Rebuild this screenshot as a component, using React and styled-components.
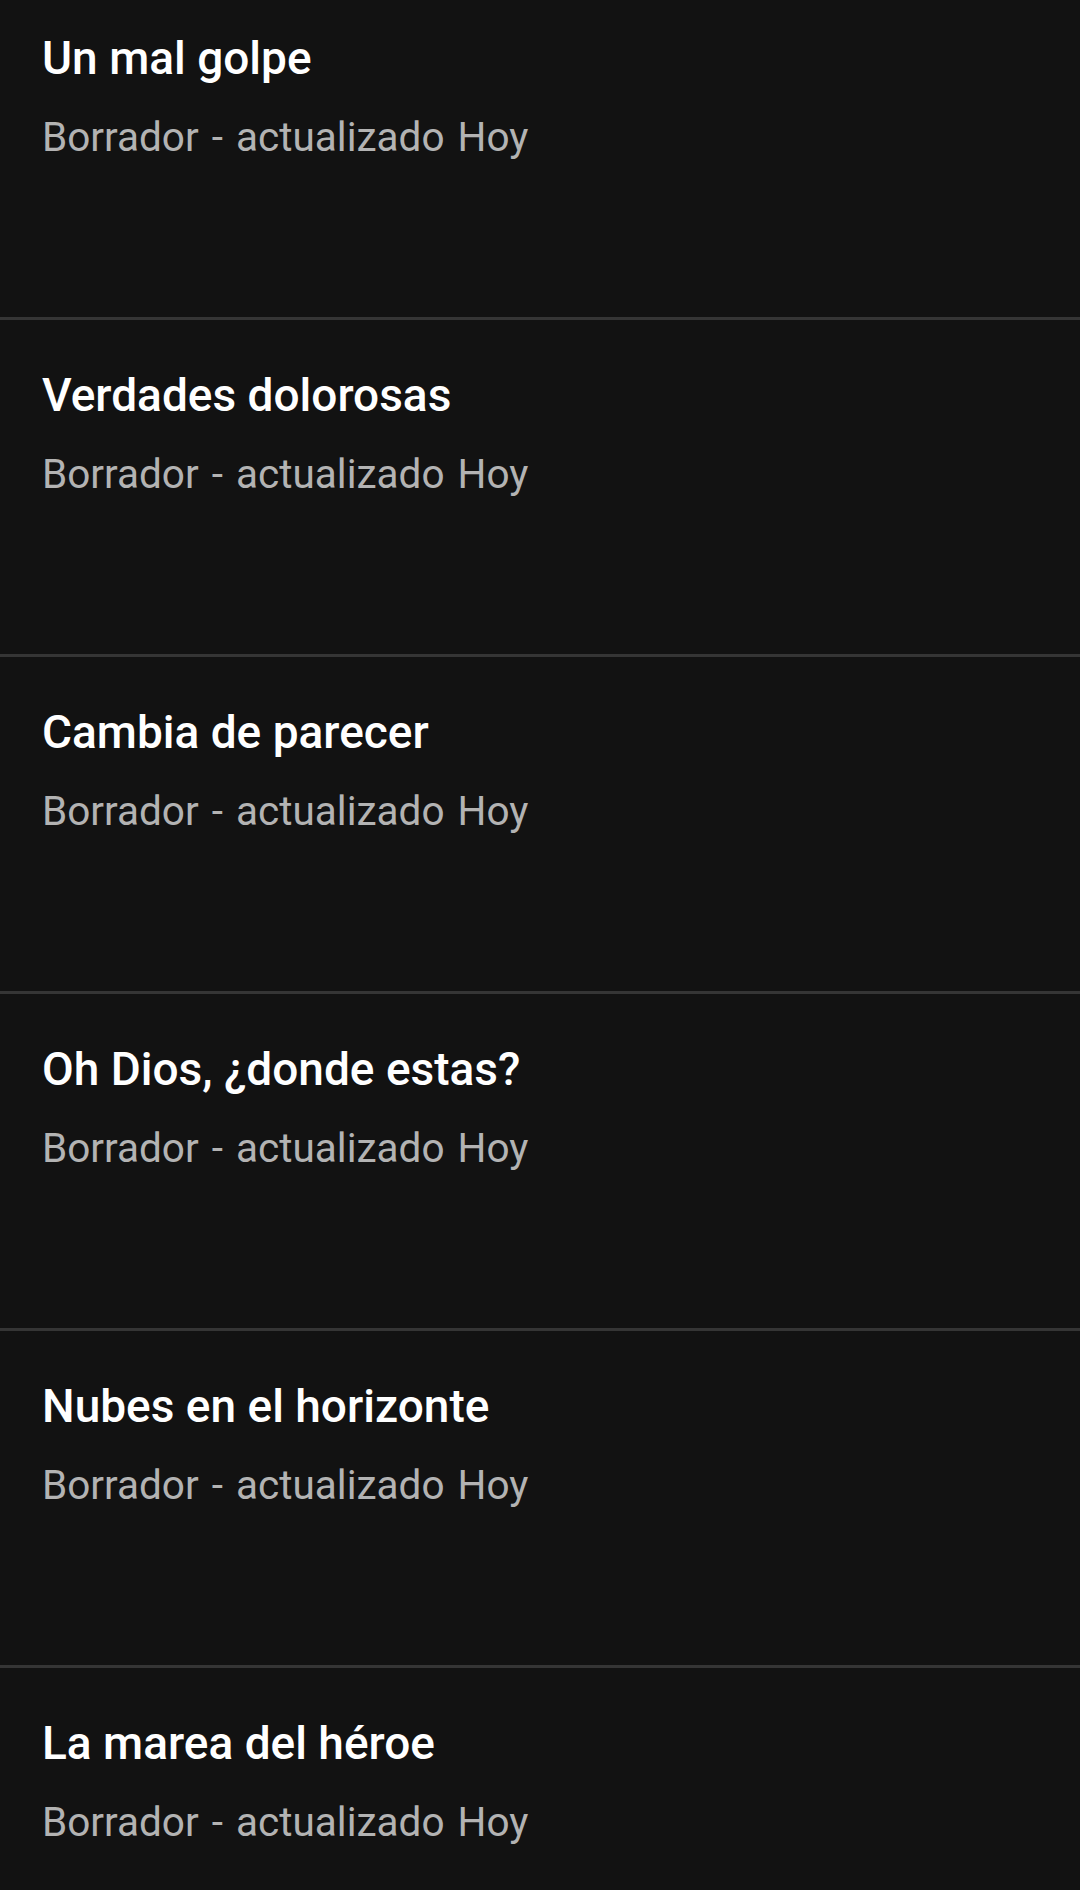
import React from "react";
import styled, { createGlobalStyle } from "styled-components";

const GlobalStyle = createGlobalStyle`
  html, body {
    margin: 0;
    padding: 0;
    background: #121212;
  }
  body {
    font-family: Roboto, "Noto Sans", "Liberation Sans", sans-serif;
    -webkit-font-smoothing: antialiased;
  }
`;

const Screen = styled.div`
  width: 1080px;
  height: 1890px;
  overflow: hidden;
  background: #121212;
`;

// list is scrolled a little, so the first row starts above the top edge
const DraftList = styled.ul`
  list-style: none;
  margin: -17px 0 0;
  padding: 0;
`;

const DraftRow = styled.li`
  height: 286px;
  padding: 48px 42px 0;
  border-bottom: 3px solid #353535;
  display: flex;
  flex-direction: column;
  gap: 28px;
`;

const Title = styled.h2`
  margin: 0;
  font-size: 46px;
  line-height: 54px;
  font-weight: 500;
  color: #ffffff;
`;

const Meta = styled.p`
  margin: 0;
  font-size: 40.5px;
  line-height: 48px;
  font-weight: 400;
  word-spacing: 3px;
  color: #b3b3b3;
`;

const drafts = [
  "Un mal golpe",
  "Verdades dolorosas",
  "Cambia de parecer",
  "Oh Dios, ¿donde estas?",
  "Nubes en el horizonte",
  "La marea del héroe",
];

const App = () => {
  return (
    <Screen>
      <GlobalStyle />
      <DraftList>
        {drafts.map((title) => (
          <DraftRow key={title}>
            <Title>{title}</Title>
            <Meta>Borrador - actualizado Hoy</Meta>
          </DraftRow>
        ))}
      </DraftList>
    </Screen>
  );
};

export default App;
